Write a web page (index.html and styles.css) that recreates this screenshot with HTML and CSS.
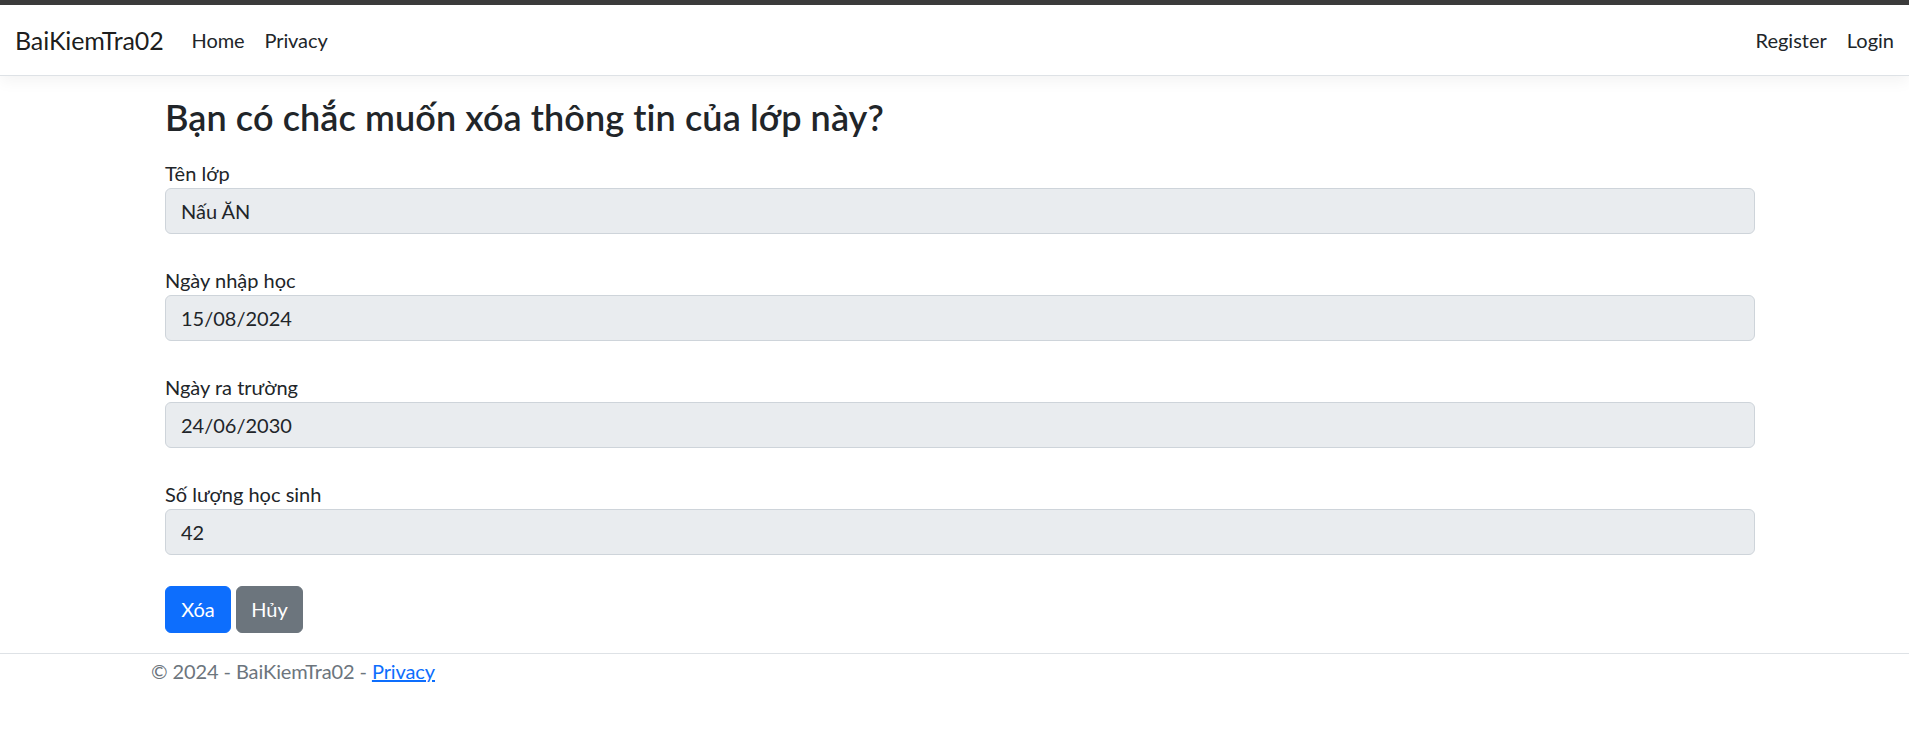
FILE: index.html
```html
<!DOCTYPE html>
<html lang="vi">
<head>
<meta charset="utf-8">
<title>Delete - BaiKiemTra02</title>
<link rel="stylesheet" href="styles.css">
</head>
<body>
<div class="topbar"></div>
<header class="navbar">
  <div class="nav-left">
    <a class="brand" href="#">BaiKiemTra02</a>
    <a class="nav-link" href="#">Home</a>
    <a class="nav-link" href="#">Privacy</a>
  </div>
  <div class="nav-right">
    <a class="nav-link" href="#">Register</a>
    <a class="nav-link" href="#">Login</a>
  </div>
</header>
<main class="main">
  <h2 class="title">Bạn có chắc muốn xóa thông tin của lớp này?</h2>
  <form class="form">
    <div class="group">
      <label class="label">Tên lớp</label>
      <input class="control" type="text" value="Nấu ĂN" readonly>
    </div>
    <div class="group">
      <label class="label">Ngày nhập học</label>
      <input class="control" type="text" value="15/08/2024" readonly>
    </div>
    <div class="group">
      <label class="label">Ngày ra trường</label>
      <input class="control" type="text" value="24/06/2030" readonly>
    </div>
    <div class="group">
      <label class="label">Số lượng học sinh</label>
      <input class="control" type="text" value="42" readonly>
    </div>
    <div class="actions">
      <button type="button" class="btn btn-primary">Xóa</button>
      <a class="btn btn-secondary" href="#">Hủy</a>
    </div>
  </form>
</main>
<footer class="footer">
  <div class="footer-inner">© 2024 - BaiKiemTra02 - <a class="footer-link" href="#">Privacy</a></div>
</footer>
</body>
</html>
```
FILE: styles.css
```css
* { box-sizing: border-box; }
html, body { margin: 0; padding: 0; background: #fff; }
body {
  font-family: Lato, "Noto Sans", sans-serif;
  font-size: 20px;
  line-height: 1.5;
  color: #212529;
}
a { text-decoration: none; }

.topbar { height: 5px; background: #3c3c3c; }

.navbar {
  height: 71px;
  display: flex;
  align-items: center;
  justify-content: space-between;
  padding: 0 5px 0 15px;
  border-bottom: 1px solid #dee2e6;
  box-shadow: 0 5px 15px rgba(0, 0, 0, 0.05);
}
.nav-left, .nav-right { display: flex; align-items: center; }
.brand {
  font-size: 25px;
  line-height: 37px;
  color: rgba(0, 0, 0, 0.9);
  margin-right: 18px;
  letter-spacing: -0.1px;
}
.nav-link {
  color: #212529;
  font-size: 20px;
  line-height: 30px;
  padding: 0 10px;
}
.nav-left .nav-link { letter-spacing: -0.1px; }

.main {
  width: 1590px;
  margin-left: 165px;
  padding-top: 20px;
}
.title {
  margin: 0 0 19px;
  font-size: 36px;
  line-height: 43px;
  font-weight: 600;
  letter-spacing: 0.1px;
  color: #212529;
}
.form { margin: 0; }
.group { margin-bottom: 31px; }
.label { display: block; line-height: 30px; }
.control {
  display: block;
  width: 100%;
  height: 46px;
  padding: 0 15px;
  font-family: inherit;
  font-size: 20px;
  color: #212529;
  background: #e9ecef;
  border: 1px solid #ced4da;
  border-radius: 6px;
  outline: none;
}
.actions { display: flex; gap: 5px; height: 47px; }
.btn {
  display: inline-block;
  height: 47px;
  line-height: 45px;
  padding: 0;
  font-family: inherit;
  font-size: 20px;
  color: #fff;
  text-align: center;
  border: 1px solid transparent;
  border-radius: 6px;
  cursor: pointer;
}
.btn-primary { background: #0d6efd; border-color: #0d6efd; width: 66px; }
.btn-secondary { background: #6c757d; border-color: #6c757d; width: 67px; }

.footer {
  margin-top: 20px;
  border-top: 1px solid #dee2e6;
}
.footer-inner {
  padding-left: 151px;
  line-height: 34px;
  color: #6c757d;
  white-space: nowrap;
  letter-spacing: -0.1px;
}
.footer-link { color: #0d6efd; text-decoration: underline; }
```
